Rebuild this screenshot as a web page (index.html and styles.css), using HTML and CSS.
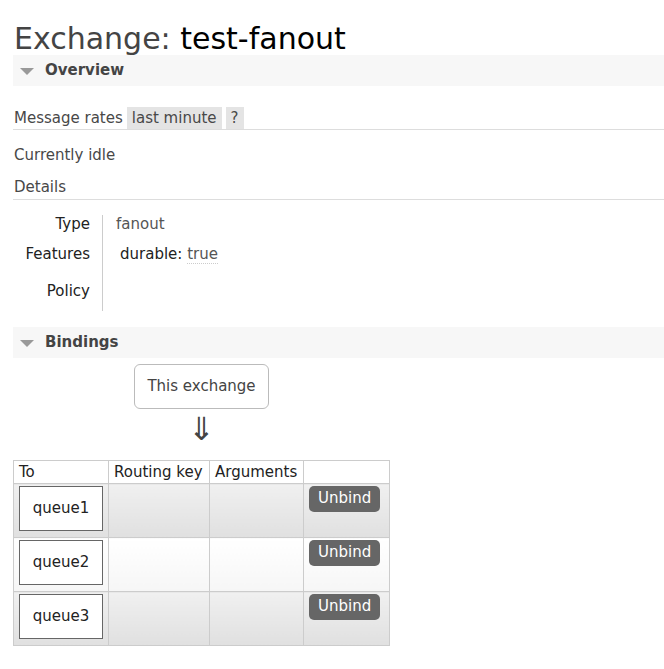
FILE: index.html
```html
<!DOCTYPE html>
<html>
<head>
<meta charset="utf-8">
<link rel="stylesheet" href="styles.css">
</head>
<body>
<div class="page">
  <h1><span class="h1-label">Exchange:</span> <b>test-fanout</b></h1>

  <div class="section-head"><span class="tri"></span>Overview</div>

  <div class="rates">
    <span>Message rates</span>
    <span class="chip">last minute</span>
    <span class="chip">?</span>
  </div>
  <div class="idle">Currently idle</div>
  <div class="subhead">Details</div>

  <table class="facts">
    <tr class="r1"><th>Type</th><td>fanout</td></tr>
    <tr class="r2"><th>Features</th><td class="feat">durable: <abbr>true</abbr></td></tr>
    <tr class="r3"><th>Policy</th><td></td></tr>
  </table>

  <div class="section-head bind"><span class="tri"></span>Bindings</div>

  <div class="flow">
    <div class="this-ex">This exchange</div>
    <div class="arrow">⇓</div>
  </div>

  <table class="bindings">
    <tr class="hdr"><th class="c1">To</th><th class="c2">Routing key</th><th class="c3">Arguments</th><th class="c4"></th></tr>
    <tr class="alt1"><td><div class="q">queue1</div></td><td></td><td></td><td><span class="btn">Unbind</span></td></tr>
    <tr class="alt2"><td><div class="q">queue2</div></td><td></td><td></td><td><span class="btn">Unbind</span></td></tr>
    <tr class="alt1"><td><div class="q">queue3</div></td><td></td><td></td><td><span class="btn">Unbind</span></td></tr>
  </table>
</div>
</body>
</html>
```

FILE: styles.css
```css
html, body {
  margin: 0;
  padding: 0;
  background: #fff;
}
body {
  font-family: "DejaVu Sans", Verdana, sans-serif;
  font-size: 15px;
  color: #484848;
  overflow: hidden;
}
.page {
  padding-left: 13px;
}
h1 {
  margin: 0;
  padding: 22px 0 0 1px;
  font-size: 30px;
  font-weight: normal;
  line-height: 33px;
  color: #444;
}
h1 b {
  font-weight: normal;
  color: #000;
}
.section-head {
  background: #f7f7f7;
  height: 31px;
  line-height: 31px;
  font-weight: bold;
  color: #444;
  padding-left: 32px;
  position: relative;
}
.tri {
  position: absolute;
  left: 7px;
  top: 13px;
  width: 0;
  height: 0;
  border-left: 7px solid transparent;
  border-right: 7px solid transparent;
  border-top: 7px solid #999;
}
.rates {
  margin-top: 21px;
  display: flex;
  align-items: center;
  gap: 4px;
  height: 22px;
  padding-left: 1px;
  border-bottom: 1px solid #ddd;
}
.chip {
  background: #e4e4e4;
  padding: 0 5px;
  line-height: 22px;
  height: 22px;
}
.idle {
  padding-left: 1px;
  margin-top: 15px;
  line-height: 20px;
}
.subhead {
  padding-left: 1px;
  margin-top: 12px;
  line-height: 20px;
  padding-bottom: 2px;
  border-bottom: 1px solid #ddd;
}
.facts {
  border-collapse: collapse;
  margin-top: 15px;
}
.facts th, .facts td {
  vertical-align: top;
  line-height: 20px;
  padding: 0;
}
.facts th {
  text-align: right;
  font-weight: normal;
  color: #222;
  width: 77px;
  padding-right: 12px;
  border-right: 1px solid #ccc;
}
.facts td {
  padding-left: 13px;
  color: #555;
}
.facts .r1 th, .facts .r1 td { height: 29px; line-height: 18px; }
.facts .r2 th, .facts .r2 td { height: 37px; }
.facts .r3 th, .facts .r3 td { height: 30px; }
.facts td.feat {
  color: #222;
  padding-left: 17px;
}
.facts abbr {
  text-decoration: none;
  color: #555;
  border-bottom: 1px dotted #ccc;
}
.bind {
  margin-top: 16px;
}
.flow {
  width: 377px;
  display: flex;
  flex-direction: column;
  align-items: center;
  padding-top: 6px;
}
.this-ex {
  border: 1px solid #bbb;
  border-radius: 6px;
  width: 133px;
  height: 43px;
  line-height: 43px;
  text-align: center;
  color: #444;
}
.arrow {
  font-size: 32px;
  line-height: 34px;
  color: #444;
  margin-top: 3px;
}
.bindings {
  border-collapse: collapse;
  margin-top: 14px;
  color: #222;
}
.bindings th, .bindings td {
  border: 1px solid #ccc;
  padding: 0;
}
.bindings th {
  text-align: left;
  font-weight: normal;
  height: 22px;
  line-height: 22px;
  padding: 0 5px;
  background: #fff;
}
.bindings .c1 { width: 84px; }
.bindings .c2 { width: 90px; }
.bindings .c3 { width: 83px; }
.bindings .c4 { width: 75px; }
.bindings td {
  height: 53px;
  vertical-align: top;
}
.alt1 td {
  background: linear-gradient(to bottom, #f0f0f0, #e0e0e0);
}
.alt2 td {
  background: linear-gradient(to bottom, #ffffff, #f6f6f6);
}
.q {
  margin: 2px 5px 0 5px;
  height: 43px;
  line-height: 43px;
  border: 1px solid #666;
  background: #fff;
  text-align: center;
  color: #222;
}
.btn {
  display: inline-block;
  margin: 2px 0 0 5px;
  background: #666;
  color: #fff;
  border-radius: 5px;
  height: 26px;
  line-height: 25px;
  padding: 0 9px;
}
```
